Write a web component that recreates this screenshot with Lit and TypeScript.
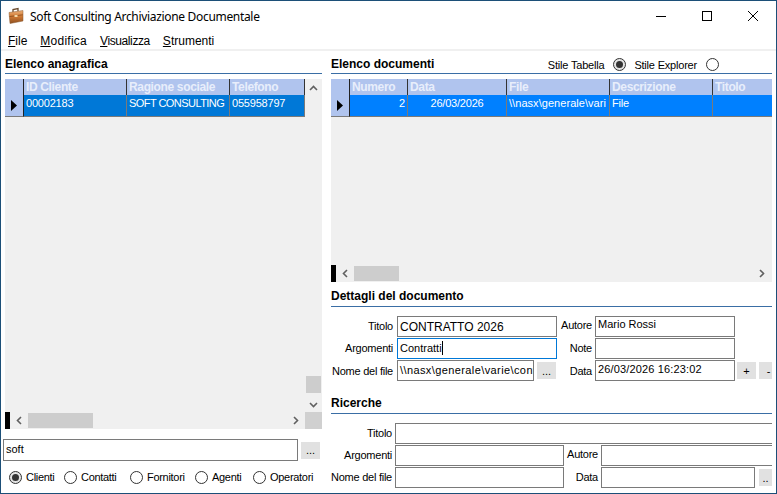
import {LitElement, html, css, svg} from 'lit';
import {customElement} from 'lit/decorators.js';

const chevron = (dir: 'up' | 'down' | 'left' | 'right') => {
    const pts = {
        up: '1,6 4.5,2.5 8,6',
        down: '1,3 4.5,6.5 8,3',
        left: '6,1 2.5,4.5 6,8',
        right: '3,1 6.5,4.5 3,8',
    }[dir];
    return html`<svg class="chev" width="9" height="9" viewBox="0 0 9 9">${svg`<polyline points=${pts} fill="none" stroke="#606060" stroke-width="1.6"/>`}</svg>`;
};

interface Col {
    label: string;
    width: number;
    value: string;
    align?: 'num' | 'mid';
    spacing?: number;
}

const leftCols: Col[] = [
    {label: 'ID Cliente', width: 103, value: '00002183'},
    {label: 'Ragione sociale', width: 103, value: 'SOFT CONSULTING', spacing: -0.55},
    {label: 'Telefono', width: 75, value: '055958797'},
];

const rightCols: Col[] = [
    {label: 'Numero', width: 58, value: '2', align: 'num'},
    {label: 'Data', width: 99, value: '26/03/2026', align: 'mid'},
    {label: 'File', width: 103, value: '\\\\nasx\\generale\\vari', spacing: 0.05},
    {label: 'Descrizione', width: 103, value: 'File'},
    {label: 'Titolo', width: 62, value: ''},
];

@customElement('app-root')
export class AppRoot extends LitElement {
    static styles = css`
        :host {
            display: block;
            width: 777px;
            height: 494px;
            overflow: hidden;
            background: #fff;
            font-family: "Liberation Sans", Arial, sans-serif;
            font-size: 11px;
            color: #000;
        }

        * {
            box-sizing: border-box;
        }

        .window {
            width: 777px;
            height: 494px;
            border: 1px solid #1c4f78;
            display: flex;
            flex-direction: column;
            overflow: hidden;
        }

        .titlebar {
            height: 30px;
            flex: none;
            display: flex;
            align-items: center;
            padding-left: 6px;
            font-family: "Noto Sans", sans-serif;
            font-size: 12px;
        }

        .titlebar .title {
            margin-left: 5px;
            flex: 1;
            letter-spacing: -0.32px;
        }

        .winbtn {
            width: 46px;
            height: 30px;
            display: flex;
            align-items: center;
            justify-content: center;
        }

        .menu {
            height: 18px;
            flex: none;
            display: flex;
            align-items: center;
            padding: 2px 0 0 7px;
            gap: 13px;
            font-size: 12px;
        }

        .menu span {
            white-space: nowrap;
        }

        .menu .wide {
            letter-spacing: 0.25px;
        }

        .menu .narrow {
            letter-spacing: -0.4px;
        }

        .body {
            flex: 1;
            min-height: 0;
            border-top: 2px solid #f0f0f0;
            display: flex;
        }

        .left {
            width: 317px;
            margin-left: 4px;
            flex: none;
            display: flex;
            flex-direction: column;
        }

        .docs {
            width: 441px;
            margin-left: 9px;
            flex: none;
            display: flex;
            flex-direction: column;
            overflow: hidden;
        }

        h2 {
            margin: 0;
            font-size: 12px;
            font-weight: bold;
            height: 23px;
            line-height: 24px;
            border-bottom: 1px solid #3a6ea5;
            flex: none;
        }

        .left h2,
        .head-row h2 {
            line-height: 27px;
        }

        .head-row {
            display: flex;
            border-bottom: 1px solid #3a6ea5;
            height: 23px;
            flex: none;
            align-items: flex-start;
        }

        .head-row h2 {
            border: none;
            flex: 1;
            height: 22px;
        }

        .style-opts {
            display: flex;
            align-items: center;
            font-size: 11px;
            letter-spacing: -0.2px;
            margin-right: 53px;
            padding-top: 7px;
        }

        .style-opts .radio {
            margin: 0 8px 0 9px;
        }

        .style-opts .radio:last-child {
            margin-right: 0;
        }

        .grid-wrap {
            margin-top: 5px;
            display: flex;
            flex-direction: column;
            flex: none;
        }

        .grid-left {
            height: 350px;
        }

        .grid-docs {
            height: 203px;
        }

        .grid-main {
            display: flex;
            min-height: 0;
            flex: 1;
            background: #f0f0f0;
        }

        .table {
            flex: 1;
            min-width: 0;
            overflow: hidden;
            align-self: flex-start;
        }

        .tr {
            display: flex;
        }

        .ind {
            width: 19px;
            flex: none;
            background: #b0c4ee;
            display: flex;
            align-items: center;
            justify-content: center;
        }

        .tr.head {
            height: 16px;
        }

        .tr.head .ind {
            border-right: 1px solid #222;
        }

        .tr.head .c {
            background: #b0c4ee;
            color: #e8eefb;
            font-weight: bold;
            font-size: 12px;
            letter-spacing: -0.35px;
            line-height: 16px;
            padding-left: 2px;
            border-right: 1px solid #333;
            white-space: nowrap;
            overflow: hidden;
            flex: none;
        }

        .tr.row {
            height: 22px;
        }

        .tr.row .ind {
            border-right: 1px solid #222;
            border-bottom: 1px solid #7a7a7a;
        }

        .tr.row .c {
            color: #fff;
            font-size: 11px;
            letter-spacing: -0.2px;
            line-height: 17px;
            padding: 0 2px;
            border-right: 1px solid #7a7a7a;
            border-bottom: 1px solid #7a7a7a;
            white-space: nowrap;
            overflow: hidden;
            flex: none;
        }

        .c.num {
            text-align: right;
        }

        .c.mid {
            text-align: center;
        }

        .row-blue .c {
            background: #0078d7;
        }

        .row-bright .c {
            background: #0080ff;
        }

        .vbar {
            width: 17px;
            flex: none;
            background: #f0f0f0;
            display: flex;
            flex-direction: column;
            align-items: center;
            padding: 5px 0 3px;
        }

        .vthumb {
            width: 15px;
            height: 17px;
            margin-top: auto;
            margin-bottom: 7px;
            background: #cdcdcd;
        }

        .hbar {
            height: 17px;
            display: flex;
            align-items: center;
            background: #f0f0f0;
            flex: none;
        }

        .hbar .black {
            width: 5px;
            height: 17px;
            background: #000;
            flex: none;
        }

        .hbar .chev {
            flex: none;
            margin-left: 5px;
        }

        .hthumb {
            height: 15px;
            background: #cdcdcd;
            flex: none;
            margin-left: 4px;
        }

        .hbar .spacer {
            flex: 1;
        }

        .corner {
            width: 17px;
            height: 17px;
            background: #d0d0d0;
            flex: none;
            margin-left: 5px;
        }

        .hbar .tail {
            width: 6px;
            flex: none;
        }

        .search {
            margin-top: 10px;
            display: flex;
            align-items: center;
            margin-left: -2px;
            gap: 3px;
            flex: none;
        }

        .search .input {
            width: 295px;
            height: 22px;
        }

        .search .btn {
            width: 19px;
        }

        .input {
            height: 21px;
            border: 1px solid #7a7a7a;
            background: #fff;
            padding: 0 2px;
            line-height: 18px;
            white-space: nowrap;
            overflow: hidden;
            flex: none;
        }

        .input.big {
            font-size: 12px;
            line-height: 20px;
        }

        .input.up {
            line-height: 15px;
        }

        .input.date {
            letter-spacing: 0.15px;
            line-height: 17px;
        }

        .input.path {
            letter-spacing: 0.4px;
            width: 137px;
        }

        .input.focus {
            border-color: #0078d7;
        }

        .caret {
            display: inline-block;
            width: 1px;
            height: 14px;
            background: #000;
            vertical-align: -3px;
        }

        .btn {
            height: 17px;
            background: #e1e1e1;
            display: flex;
            align-items: center;
            justify-content: center;
            font-size: 11px;
            flex: none;
        }

        .radios {
            margin-top: 8px;
            display: flex;
            align-items: center;
            height: 16px;
            padding-left: 4px;
            flex: none;
            letter-spacing: -0.3px;
        }

        .opt {
            display: flex;
            align-items: center;
            white-space: nowrap;
        }

        .radio {
            width: 13px;
            height: 13px;
            border: 1px solid #333;
            border-radius: 50%;
            background: #fff;
            margin-right: 4px;
            display: flex;
            align-items: center;
            justify-content: center;
            flex: none;
        }

        .radio.on {
            background: #e4e4e4;
        }

        .radio.on::after {
            content: '';
            width: 7px;
            height: 7px;
            border-radius: 50%;
            background: #333;
        }

        .section {
            flex: none;
        }

        .sec-detail {
            margin-top: 2px;
        }

        .sec-search {
            margin-top: 9px;
        }

        .fields {
            margin-top: 9px;
            display: grid;
            grid-auto-rows: 22px;
            align-items: start;
        }

        .lbl {
            text-align: right;
            white-space: nowrap;
            letter-spacing: -0.25px;
            line-height: 21px;
        }

        .lbl.up {
            line-height: 18px;
        }

        .lbl.down {
            line-height: 23px;
        }

        .details {
            grid-template-columns: 62px 164px 35px 143px 2px 19px 3px 19px;
        }

        .details .in-a {
            margin-left: 4px;
        }

        .details .in-b {
            margin-left: 3px;
        }

        .details .btn {
            margin-top: 2px;
        }

        .find {
            grid-template-columns: 61px 172px 34px 157px 4px 13px;
        }

        .find .in-a,
        .find .in-b {
            margin-left: 3px;
        }

        .find .btn {
            margin-top: 2px;
        }

        .find .span-all {
            grid-column: 2 / -1;
            border-right: none;
        }

        .find .span-rest {
            grid-column: 4 / -1;
            border-right: none;
        }

        .file-cell {
            display: flex;
            align-items: flex-start;
            gap: 3px;
        }

        .file-cell .btn {
            width: 19px;
            margin-top: 2px;
        }

        .w-clienti { width: 55px; }
        .w-contatti { width: 66px; }
        .w-fornitori { width: 65px; }
        .w-agenti { width: 58px; }
    `;

    private table(cols: Col[], rowClass: string) {
        return html`
            <div class="table">
                <div class="tr head">
                    <div class="ind"></div>
                    ${cols.map((c) => html`<div class="c" style="width:${c.width}px">${c.label}</div>`)}
                </div>
                <div class="tr row ${rowClass}">
                    <div class="ind">
                        <svg width="8" height="13" viewBox="0 0 8 13">${svg`<polygon points="1,1 7,6.5 1,12" fill="#000"/>`}</svg>
                    </div>
                    ${cols.map((c) => html`<div class="c ${c.align ?? ''}" style="width:${c.width}px${c.spacing !== undefined ? `;letter-spacing:${c.spacing}px` : ''}">${c.value}</div>`)}
                </div>
            </div>
        `;
    }

    private hbar(thumbWidth: number) {
        return html`
            <div class="black"></div>
            ${chevron('left')}
            <div class="hthumb" style="width:${thumbWidth}px"></div>
            <div class="spacer"></div>
            ${chevron('right')}
        `;
    }

    render() {
        return html`
            <div class="window">
                <div class="titlebar">
                    <svg width="18" height="18" viewBox="0 0 18 18">
                        ${svg`
                            <defs>
                                <linearGradient id="bag" x1="0" y1="0" x2="0" y2="1">
                                    <stop offset="0" stop-color="#eeb27a"/>
                                    <stop offset="0.45" stop-color="#d07a34"/>
                                    <stop offset="1" stop-color="#8f4f20"/>
                                </linearGradient>
                            </defs>
                            <path d="M6 5.5V2.6l5-1.1v3" fill="none" stroke="#6b4a2c" stroke-width="1.3"/>
                            <path d="M2 5.5L16 3.5V14L3 16.5Z" fill="url(#bag)" stroke="#8a5a30" stroke-width="0.5"/>
                            <path d="M2.4 9.6L15.8 7.8" stroke="#8a4a1c" stroke-width="0.8"/>
                            <rect x="7.5" y="8" width="3" height="2" fill="#f4d9a8"/>
                        `}
                    </svg>
                    <div class="title">Soft Consulting Archiviazione Documentale</div>
                    <div class="winbtn">
                        <svg width="10" height="10" viewBox="0 0 10 10">${svg`<line x1="0" y1="5.5" x2="10" y2="5.5" stroke="#000"/>`}</svg>
                    </div>
                    <div class="winbtn">
                        <svg width="10" height="10" viewBox="0 0 10 10">${svg`<rect x="0.5" y="0.5" width="9" height="9" fill="none" stroke="#000"/>`}</svg>
                    </div>
                    <div class="winbtn">
                        <svg width="10" height="10" viewBox="0 0 10 10">${svg`<path d="M0 0L10 10M10 0L0 10" stroke="#000" fill="none"/>`}</svg>
                    </div>
                </div>
                <div class="menu">
                    <span><u>F</u>ile</span>
                    <span class="wide"><u>M</u>odifica</span>
                    <span class="narrow"><u>V</u>isualizza</span>
                    <span><u>S</u>trumenti</span>
                </div>
                <div class="body">
                    <div class="left">
                        <h2>Elenco anagrafica</h2>
                        <div class="grid-wrap grid-left">
                            <div class="grid-main">
                                ${this.table(leftCols, 'row-blue')}
                                <div class="vbar">
                                    ${chevron('up')}
                                    <div class="vthumb"></div>
                                    ${chevron('down')}
                                </div>
                            </div>
                            <div class="hbar">
                                ${this.hbar(65)}
                                <div class="corner"></div>
                            </div>
                        </div>
                        <div class="search">
                            <div class="input">soft</div>
                            <div class="btn">...</div>
                        </div>
                        <div class="radios">
                            <div class="opt w-clienti"><span class="radio on"></span>Clienti</div>
                            <div class="opt w-contatti"><span class="radio"></span>Contatti</div>
                            <div class="opt w-fornitori"><span class="radio"></span>Fornitori</div>
                            <div class="opt w-agenti"><span class="radio"></span>Agenti</div>
                            <div class="opt"><span class="radio"></span>Operatori</div>
                        </div>
                    </div>
                    <div class="docs">
                        <div class="head-row">
                            <h2>Elenco documenti</h2>
                            <div class="style-opts">
                                Stile Tabella<span class="radio on"></span>Stile Explorer<span class="radio"></span>
                            </div>
                        </div>
                        <div class="grid-wrap grid-docs">
                            <div class="grid-main">
                                ${this.table(rightCols, 'row-bright')}
                            </div>
                            <div class="hbar">
                                ${this.hbar(45)}
                                <div class="tail"></div>
                            </div>
                        </div>
                        <div class="section sec-detail">
                            <h2>Dettagli del documento</h2>
                            <div class="fields details">
                                <div class="lbl">Titolo</div>
                                <div class="input big in-a">CONTRATTO 2026</div>
                                <div class="lbl up">Autore</div>
                                <div class="input up in-b">Mario Rossi</div>
                                <div></div><div></div><div></div><div></div>

                                <div class="lbl">Argomenti</div>
                                <div class="input focus in-a">Contratti<span class="caret"></span></div>
                                <div class="lbl">Note</div>
                                <div class="input in-b"></div>
                                <div></div><div></div><div></div><div></div>

                                <div class="lbl down">Nome del file</div>
                                <div class="file-cell in-a">
                                    <div class="input path">\\\\nasx\\generale\\varie\\contr</div>
                                    <div class="btn">...</div>
                                </div>
                                <div class="lbl down">Data</div>
                                <div class="input date in-b">26/03/2026 16:23:02</div>
                                <div></div>
                                <div class="btn">+</div>
                                <div></div>
                                <div class="btn">-</div>
                            </div>
                        </div>
                        <div class="section sec-search">
                            <h2>Ricerche</h2>
                            <div class="fields find">
                                <div class="lbl">Titolo</div>
                                <div class="input in-a span-all"></div>

                                <div class="lbl">Argomenti</div>
                                <div class="input in-a"></div>
                                <div class="lbl up">Autore</div>
                                <div class="input in-b span-rest"></div>

                                <div class="lbl">Nome del file</div>
                                <div class="input in-a"></div>
                                <div class="lbl">Data</div>
                                <div class="input in-b"></div>
                                <div></div>
                                <div class="btn">..</div>
                            </div>
                        </div>
                    </div>
                </div>
            </div>
        `;
    }
}

declare global {
    interface HTMLElementTagNameMap {
        'app-root': AppRoot;
    }
}
